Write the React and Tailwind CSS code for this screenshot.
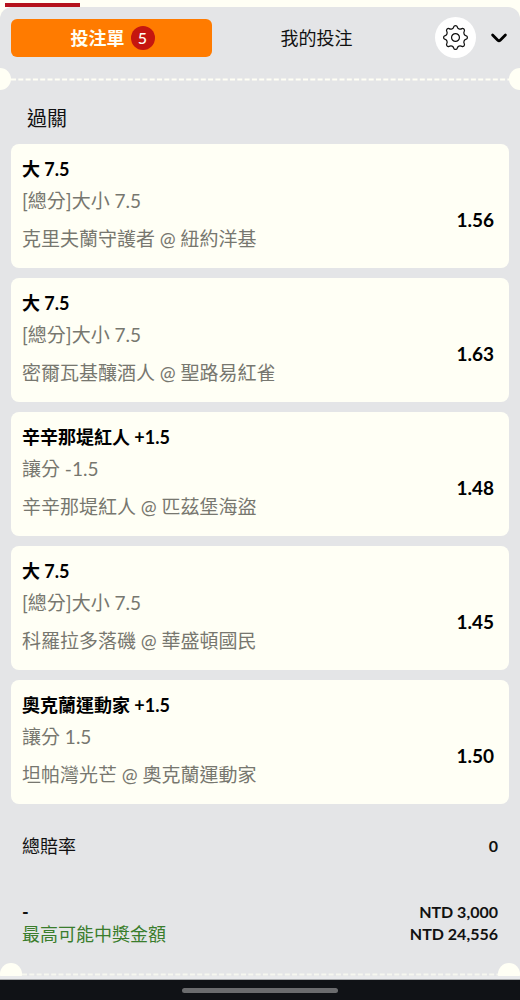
import { useState } from 'react'

const SELECTIONS = [
  { id: 1, pick: '大 7.5', market: '[總分]大小 7.5', match: '克里夫蘭守護者 @ 紐約洋基', odds: '1.56' },
  { id: 2, pick: '大 7.5', market: '[總分]大小 7.5', match: '密爾瓦基釀酒人 @ 聖路易紅雀', odds: '1.63' },
  { id: 3, pick: '辛辛那堤紅人 +1.5', market: '讓分 -1.5', match: '辛辛那堤紅人 @ 匹茲堡海盜', odds: '1.48' },
  { id: 4, pick: '大 7.5', market: '[總分]大小 7.5', match: '科羅拉多落磯 @ 華盛頓國民', odds: '1.45' },
  { id: 5, pick: '奧克蘭運動家 +1.5', market: '讓分 1.5', match: '坦帕灣光芒 @ 奧克蘭運動家', odds: '1.50' },
]

function GearIcon() {
  return (
    <svg viewBox="-12 -12 24 24" className="size-[25px]" fill="none" stroke="#111" strokeWidth="1.2" strokeLinejoin="round" aria-hidden="true">
      <circle r="3.8" />
      <path d="M-1.6 -10.4Q-1.4 -11.4 0 -11.4Q1.4 -11.4 1.6 -10.4C2 -8.2 4.2 -7.4 6.2 -8.5Q7.1 -9 8.1 -8.1Q9 -7.1 8.5 -6.2C7.4 -4.2 8.2 -2 10.4 -1.6Q11.4 -1.4 11.4 0Q11.4 1.4 10.4 1.6C8.2 2 7.4 4.2 8.5 6.2Q9 7.1 8.1 8.1Q7.1 9 6.2 8.5C4.2 7.4 2 8.2 1.6 10.4Q1.4 11.4 0 11.4Q-1.4 11.4 -1.6 10.4C-2 8.2 -4.2 7.4 -6.2 8.5Q-7.1 9 -8.1 8.1Q-9 7.1 -8.5 6.2C-7.4 4.2 -8.2 2 -10.4 1.6Q-11.4 1.4 -11.4 0Q-11.4 -1.4 -10.4 -1.6C-8.2 -2 -7.4 -4.2 -8.5 -6.2Q-9 -7.1 -8.1 -8.1Q-7.1 -9 -6.2 -8.5C-4.2 -7.4 -2 -8.2 -1.6 -10.4Z" />
    </svg>
  )
}

function ChevronIcon() {
  return (
    <svg viewBox="0 0 18 12" className="w-[18px] h-3" fill="none" stroke="#000" strokeWidth="2.8" aria-hidden="true">
      <path d="M2.6 3L7.8 8.2Q9 9.3 10.2 8.2L15.4 3" strokeLinecap="round" strokeLinejoin="round" />
    </svg>
  )
}

function DashedLine() {
  return (
    <svg className="w-full h-[3px]" aria-hidden="true">
      <line x1="0" y1="1.5" x2="100%" y2="1.5" stroke="#fffff5" strokeWidth="2" strokeDasharray="5 2.3" />
    </svg>
  )
}

function SelectionCard({ selection }) {
  return (
    <li className="rounded-lg bg-[#fffff5] pt-3 pb-[10px] pl-[11px] pr-[15px]">
      <h3 className="text-lg leading-[26px] font-bold text-black">{selection.pick}</h3>
      <div className="flex items-center justify-between">
        <div className="text-[19px] leading-[38px] text-[#77776f]">
          <p>{selection.market}</p>
          <p>{selection.match}</p>
        </div>
        <span className="text-[19px] leading-9 font-bold text-black">{selection.odds}</span>
      </div>
    </li>
  )
}

function App() {
  const [tab, setTab] = useState('slip')

  return (
    <div className="min-h-screen flex flex-col bg-[#fffff5] font-['Lato','Noto_Sans_CJK_TC',sans-serif] text-[#111]">
      <div className="h-[7px] pt-[3px] pl-[5px]">
        <div className="w-[75px] h-1 bg-[#b5121b]"></div>
      </div>

      <div className="grow flex flex-col rounded-t-xl bg-[#e4e5e7] overflow-hidden">
        <header className="flex items-center pt-[10px] pl-[11px] pr-3">
          <div className="grow grid grid-cols-2 items-center text-lg">
            <button
              onClick={() => setTab('slip')}
              aria-pressed={tab === 'slip'}
              className="h-[38px] flex items-center justify-center gap-[6px] rounded-md bg-[#ff7b00] pl-[2px] font-bold text-[#fffff5]"
            >
              投注單
              <span className="size-6 flex items-center justify-center rounded-full bg-[#c5160f] text-base font-medium">5</span>
            </button>
            <button onClick={() => setTab('mine')} aria-pressed={tab === 'mine'} className="h-[38px] pl-2">
              我的投注
            </button>
          </div>
          <button aria-label="設定" className="ml-[22px] size-[41px] flex items-center justify-center rounded-full bg-white">
            <GearIcon />
          </button>
          <button aria-label="收合" className="ml-[14px]">
            <ChevronIcon />
          </button>
        </header>

        <div className="flex items-center mt-[10px] -mx-[11px]">
          <span className="size-[22px] shrink-0 rounded-full bg-[#fffff5]"></span>
          <DashedLine />
          <span className="size-[22px] shrink-0 rounded-full bg-[#fffff5]"></span>
        </div>

        <main className="px-[11px]">
          <h2 className="mt-[13px] mb-[11px] pl-4 text-xl leading-[30px]">過關</h2>
          <ul className="flex flex-col gap-[10px]">
            {SELECTIONS.map((selection) => (
              <SelectionCard key={selection.id} selection={selection} />
            ))}
          </ul>
        </main>

        <dl className="pt-[31px] px-[22px] text-lg leading-[22px]">
          <div className="flex justify-between">
            <dt>總賠率</dt>
            <dd className="text-base leading-[22px] font-bold">0</dd>
          </div>
          <div className="flex justify-between mt-11">
            <dt className="font-bold">-</dt>
            <dd className="text-base leading-[22px] font-bold">NTD 3,000</dd>
          </div>
          <div className="flex justify-between">
            <dt className="text-[#3a7d2c]">最高可能中獎金額</dt>
            <dd className="text-base leading-[22px] font-bold">NTD 24,556</dd>
          </div>
        </dl>

        <div className="mt-auto h-[13px] flex overflow-hidden">
          <span className="size-[22px] shrink-0 rounded-full bg-[#fffff5]"></span>
          <div className="grow flex items-end opacity-70">
            <DashedLine />
          </div>
          <span className="size-[22px] shrink-0 rounded-full bg-[#fffff5]"></span>
        </div>
        <div className="h-1 border-b border-[#a9abad] bg-[#e9eaec]"></div>
      </div>

      <footer className="h-5 flex items-center justify-center bg-[#101216]">
        <div className="w-[30%] h-[5px] rounded-full bg-[#6b6c6e]"></div>
      </footer>
    </div>
  )
}

export default App
